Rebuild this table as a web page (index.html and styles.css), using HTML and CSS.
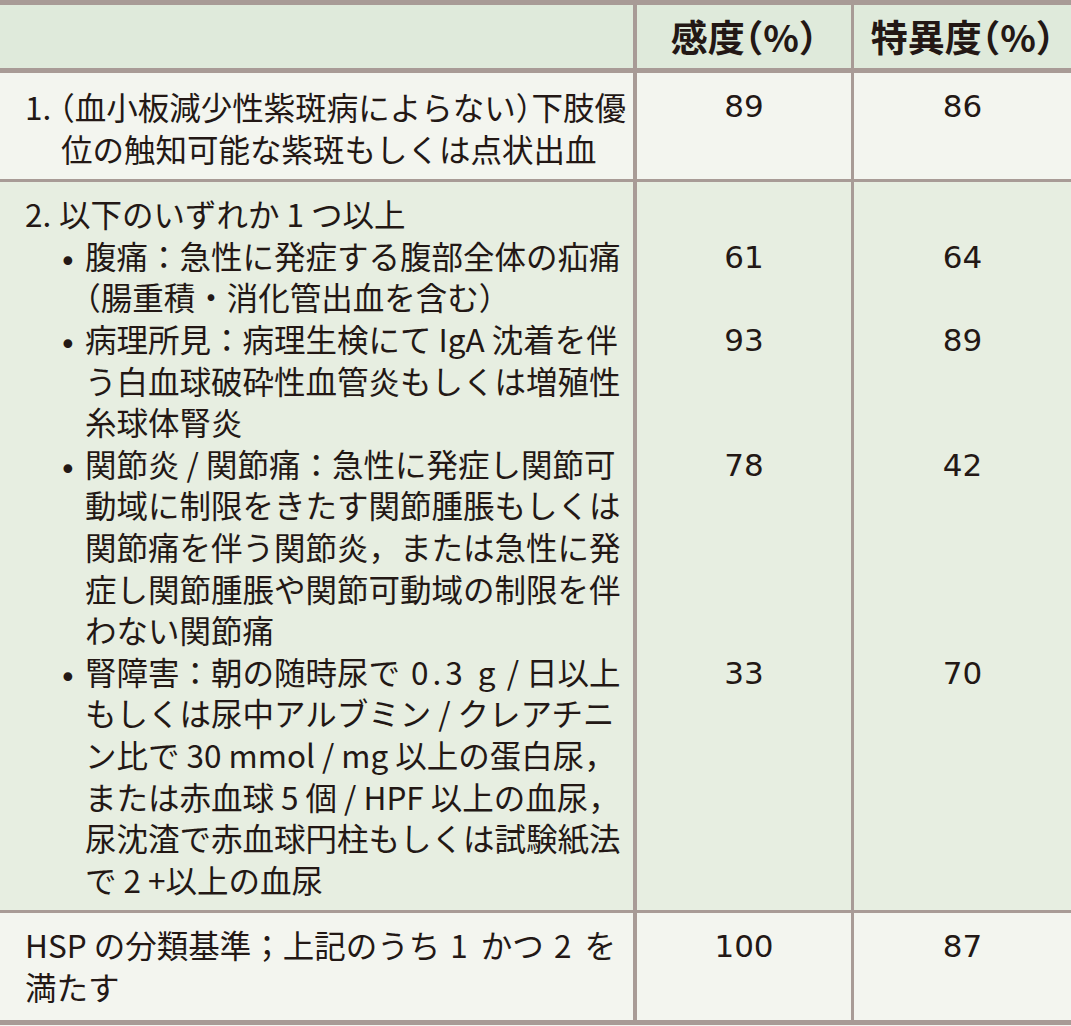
FILE: index.html
```html
<!DOCTYPE html>
<html lang="ja">
<head>
<meta charset="utf-8">
<title>HSP 分類基準</title>
<link rel="stylesheet" href="styles.css">
</head>
<body>
<table class="crit">
  <thead>
    <tr class="head">
      <th class="c1"></th>
      <th class="c2">感度<span class="h">（</span>%<span class="h">）</span></th>
      <th class="c3">特異度<span class="h">（</span>%<span class="h">）</span></th>
    </tr>
  </thead>
  <tbody>
    <tr class="r1">
      <td class="c1">
        <div class="item">
          <span class="num">1.</span>
          <span class="txt first-item"><span class="h">（</span>血小板減少性紫斑病によらない<span class="h">）</span>下肢優<br>位の触知可能な紫斑もしくは点状出血</span>
        </div>
      </td>
      <td class="c2 val">89</td>
      <td class="c3 val">86</td>
    </tr>
    <tr class="r2 first">
      <td class="c1">
        <div class="item">
          <span class="num">2.</span>
          <span class="txt">以下のいずれか 1 つ以上</span>
        </div>
      </td>
      <td class="c2 val"></td>
      <td class="c3 val"></td>
    </tr>
    <tr class="r2">
      <td class="c1">
        <div class="bul">
          <span class="dot">•</span>
          <span class="txt">腹痛：急性に発症する腹部全体の疝痛<br><span class="h">（</span>腸重積・消化管出血を含む<span class="h">）</span></span>
        </div>
      </td>
      <td class="c2 val">61</td>
      <td class="c3 val">64</td>
    </tr>
    <tr class="r2">
      <td class="c1">
        <div class="bul">
          <span class="dot">•</span>
          <span class="txt">病理所見：病理生検にて IgA 沈着を伴<br>う白血球破砕性血管炎もしくは増殖性<br>糸球体腎炎</span>
        </div>
      </td>
      <td class="c2 val">93</td>
      <td class="c3 val">89</td>
    </tr>
    <tr class="r2">
      <td class="c1">
        <div class="bul">
          <span class="dot">•</span>
          <span class="txt">関節炎<span class="sl">/</span>関節痛：急性に発症し関節可<br>動域に制限をきたす関節腫脹もしくは<br>関節痛を伴う関節炎，または急性に発<br>症し関節腫脹や関節可動域の制限を伴<br>わない関節痛</span>
        </div>
      </td>
      <td class="c2 val">78</td>
      <td class="c3 val">42</td>
    </tr>
    <tr class="r2 last">
      <td class="c1">
        <div class="bul">
          <span class="dot">•</span>
          <span class="txt">腎障害：朝の随時尿で<span class="wide"> 0.3 g</span><span class="sl">/</span>日以上<br>もしくは尿中アルブミン<span class="sl">/</span>クレアチニ<br>ン比で 30 mmol<span class="sl">/</span>mg 以上の蛋白尿，<br>または赤血球 5 個<span class="sl">/</span>HPF 以上の血尿，<br>尿沈渣で赤血球円柱もしくは試験紙法<br>で 2 +以上の血尿</span>
        </div>
      </td>
      <td class="c2 val">33</td>
      <td class="c3 val">70</td>
    </tr>
    <tr class="r3">
      <td class="c1">
        <div class="plain">HSP の分類基準；上記のうち<span class="wide2"> 1 </span>かつ<span class="wide2"> 2 </span>を<br>満たす</div>
      </td>
      <td class="c2 val">100</td>
      <td class="c3 val">87</td>
    </tr>
  </tbody>
</table>
</body>
</html>
```
FILE: styles.css
```css
html, body {
  margin: 0;
  padding: 0;
}

body {
  background: #f3f5ef;
  color: #231815;
  font-family: "Noto Sans CJK JP", sans-serif;
}

.crit {
  width: 1071px;
  border-collapse: separate;
  border-spacing: 0;
  table-layout: fixed;
}

.crit th,
.crit td {
  box-sizing: border-box;
  padding: 0;
  vertical-align: top;
  font-size: 31.5px;
  line-height: 41.6px;
  font-weight: 400;
  white-space: nowrap;
}

.crit .c1 {
  width: 637px;
  border-right: 4px solid #a89b96;
  padding-left: 25px;
}

.crit .c2 {
  width: 217px;
  border-right: 3px solid #a89b96;
}

.crit .c3 {
  width: 217px;
}

.h {
  font-feature-settings: "halt";
}

.sl {
  padding: 0 7px;
}

.wide {
  letter-spacing: 4px;
}

.wide2 {
  letter-spacing: 3px;
}

/* header */
.head th {
  background: #dfeadb;
  border-top: 5px solid #a89b96;
  border-bottom: 5px solid #a89b96;
  font-size: 37px;
  font-weight: 700;
  line-height: 63px;
  text-align: center;
  vertical-align: middle;
}

/* rows */
.r1 td {
  background: #f3f5ef;
  padding-top: 13px;
  padding-bottom: 10px;
  border-bottom: 3px solid #a89b96;
}

.r2 td {
  background: #e7eee1;
}

.r2.first td {
  padding-top: 11px;
}

.r2.last td {
  padding-bottom: 10px;
  border-bottom: 3px solid #a89b96;
}

.r3 td {
  background: #f3f5ef;
  padding-top: 11px;
  padding-bottom: 12.6px;
  border-bottom: 5px solid #a89b96;
}

.crit .val {
  text-align: center;
  font-family: "DejaVu Sans", "Noto Sans CJK JP", sans-serif;
  font-size: 31px;
  font-weight: 400;
  padding-top: 13px;
}

.crit .r2 .val {
  padding-top: 2px;
}

.crit .r2.first .val {
  padding-top: 11px;
}

.crit .r3 .val {
  padding-top: 13px;
}

.item,
.bul {
  display: flex;
  align-items: flex-start;
}

.num {
  flex: none;
  width: 34px;
}

.first-item {
  padding-left: 2px;
  text-indent: -2px;
}

.bul {
  padding-left: 34px;
}

.dot {
  flex: none;
  width: 26px;
  padding-top: 6px;
  font-family: "DejaVu Sans", sans-serif;
  font-size: 30px;
}

.txt {
  display: block;
}
```
